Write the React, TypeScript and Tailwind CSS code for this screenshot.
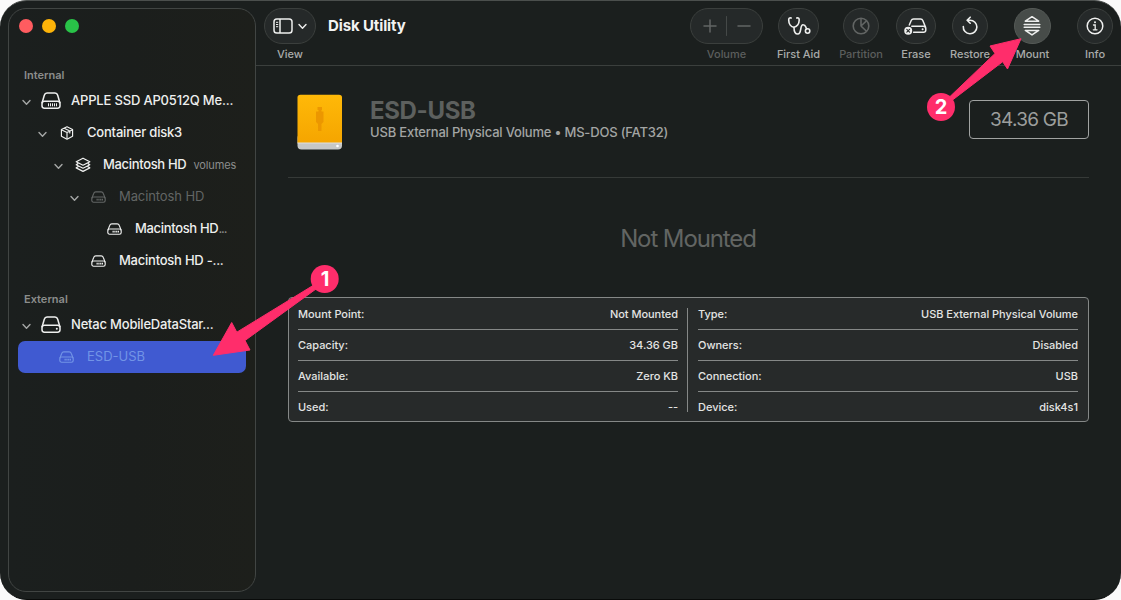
import type { ReactNode } from 'react';

function Chevron({ className = '' }: { className?: string }) {
  return (
    <svg className={`shrink-0 ${className}`} width="9" height="7" viewBox="0 0 9 7" fill="none" stroke="currentColor" strokeWidth="1.4" strokeLinecap="round" strokeLinejoin="round">
      <path d="M1 1.5 4.5 5.2 8 1.5" />
    </svg>
  );
}

function BigDrive({ vents = false }: { vents?: boolean }) {
  return (
    <svg className="-mt-px shrink-0" width="20" height="18" viewBox="0 0 20 18" fill="none" stroke="currentColor" strokeWidth="1.5" strokeLinejoin="round">
      <path d="M1 11.2 3.3 3.2Q3.9 1 6 1H14Q16.1 1 16.7 3.2L19 11.2" />
      <rect x="1" y="9.2" width="18" height="7" rx="2.4" />
      {vents ? (
        <path d="M7.5 11.3v3M9.5 11.3v3M11.5 11.3v3M13.5 11.3v3M15.5 11.3v3" strokeWidth="1" />
      ) : (
        <circle cx="15.8" cy="12.8" r="1" fill="currentColor" stroke="none" />
      )}
    </svg>
  );
}

function SmallDrive() {
  return (
    <svg className="-ml-px shrink-0" width="15" height="12" viewBox="0 0 15 12" fill="none" stroke="currentColor" strokeWidth="1.15" strokeLinejoin="round">
      <path d="M.8 7.4 2.8 2.2Q3.3.8 4.8.8H10.2Q11.7.8 12.2 2.2L14.2 7.4" />
      <rect x=".8" y="6" width="13.4" height="5.2" rx="1.7" />
      <path d="M5.5 8.6H12" strokeWidth="1.6" strokeDasharray="1.3 .5" />
    </svg>
  );
}

function Cube() {
  return (
    <svg className="shrink-0" width="14" height="14" viewBox="0 0 14 14" fill="none" stroke="currentColor" strokeWidth="1.15" strokeLinejoin="round">
      <path d="M7 .8 12.6 3.6V10.2L7 13.2 1.4 10.2V3.6Z" />
      <path d="M1.4 3.8 7 6.6 12.6 3.8M7 6.6V13M4.2 2.3 9.8 5.1V7.6" />
    </svg>
  );
}

function Stack() {
  return (
    <svg className="shrink-0" width="16" height="16" viewBox="0 0 16 16" fill="none" stroke="currentColor" strokeWidth="1.25" strokeLinejoin="round" strokeLinecap="round">
      <path d="M8 1.2 14.8 4.7 8 8.2 1.2 4.7Z" />
      <path d="M3 6.6 1.2 7.7 8 11.2 14.8 7.7 13 6.6M3 9.8 1.2 10.9 8 14.4 14.8 10.9 13 9.8" />
    </svg>
  );
}

function Row({ pad, open, icon, children, tone = 'text-[#eeefee]' }: { pad: string; open?: boolean; icon: ReactNode; children: ReactNode; tone?: string }) {
  return (
    <div className={`flex h-8 items-center whitespace-nowrap text-[13px] font-medium tracking-[-0.2px] ${pad} ${tone}`}>
      <span className="flex w-[9px] pt-0.5 text-[#a5a7a6]">{open && <Chevron />}</span>
      <span className="ml-1.5 flex w-[28px] justify-center">{icon}</span>
      <span className="ml-[6px]">{children}</span>
    </div>
  );
}

function Tool({ label, width, gap, disabled, active, children }: { label: string; width: string; gap: string; disabled?: boolean; active?: boolean; children: ReactNode }) {
  return (
    <div className={`flex shrink-0 flex-col items-center ${width} ${gap}`}>
      <div className={`flex h-9 w-full items-center justify-center rounded-full border ${active ? 'border-[#555a57] bg-[#474c49]' : 'border-[#3b3f3d] bg-[#252929]'} ${disabled ? 'text-[#626564]' : 'text-[#eeefee]'}`}>
        {children}
      </div>
      <span className={`mt-[3px] whitespace-nowrap text-[11px] leading-[14px] font-medium tracking-[-0.03px] ${disabled ? 'text-[#5b5e5d]' : 'text-[#a9abaa]'}`}>{label}</span>
    </div>
  );
}

function Details({ rows, className = '' }: { rows: [string, string][]; className?: string }) {
  return (
    <div className={className}>
      {rows.map(([name, value], i) => (
        <div key={name} className={`flex h-[31px] items-center justify-between text-[11px] font-medium text-[#e3e4e3] ${i < 3 ? 'border-b border-[#858887]' : ''}`}>
          <span className="tracking-[-0.03px]">{name}</span>
          <span className="tracking-[-0.03px]">{value}</span>
        </div>
      ))}
    </div>
  );
}

export default function App() {
  return (
    <div className="relative h-[600px] w-[1121px] overflow-hidden bg-[#fafafa] font-['Inter','Liberation_Sans',sans-serif]">
      <div className="flex h-[600px] overflow-hidden rounded-[27px] border-t border-b border-t-[#4b4f4d] border-b-[#090b0a] bg-[#1b1f1e]">
        <aside className="mt-[7px] ml-2 h-[584px] w-[248px] shrink-0 rounded-[18px] border border-[#414543] bg-linear-to-r from-[#1b1f1e] via-[#1b1e1c] to-[#1d1f1b]">
          <div className="flex h-[34px] items-center gap-[9px] pl-2.5">
            <i className="size-3.5 rounded-full bg-[#ff5c60]" />
            <i className="size-3.5 rounded-full bg-[#fdb409]" />
            <i className="size-3.5 rounded-full bg-[#29c348]" />
          </div>
          <h2 className="mt-[23px] mb-px flex h-[18px] items-center pl-[15px] text-[11px] font-semibold text-[#8b8d8c]">Internal</h2>
          <Row pad="pl-[13px]" open icon={<BigDrive vents />}><span className="tracking-[-0.18px]">APPLE SSD AP0512Q Me...</span></Row>
          <Row pad="pl-[29px]" open icon={<Cube />}>Container disk3</Row>
          <Row pad="pl-[45px]" open icon={<Stack />}><span className="tracking-[-0.33px]">Macintosh HD</span><span className="ml-[7px] text-[11px] font-normal tracking-[-0.1px] text-[#8b8d8c]">volumes</span></Row>
          <Row pad="pl-[61px]" open icon={<SmallDrive />} tone="text-[#626564]"><span className="font-normal tracking-[-0.1px]">Macintosh HD</span></Row>
          <Row pad="pl-[77px]" icon={<SmallDrive />}><span className="tracking-[-0.33px]">Macintosh HD</span><span className="font-normal tracking-[-1.1px] text-[#8b8d8c]">...</span></Row>
          <Row pad="pl-[61px]" icon={<SmallDrive />}><span className="tracking-[-0.24px]">Macintosh HD -...</span></Row>
          <h2 className="mt-[13px] mb-px flex h-[18px] items-center pl-[15px] text-[11px] font-semibold text-[#8b8d8c]">External</h2>
          <Row pad="pl-[13px]" open icon={<BigDrive />}>Netac MobileDataStar...</Row>
          <div className="mr-[9px] ml-[9px] rounded-[7px] bg-[#405ad1]">
            <Row pad="pl-[20px]" icon={<SmallDrive />} tone="text-[#7294e6]"><span className="font-normal tracking-normal">ESD-USB</span></Row>
          </div>
        </aside>

        <main className="min-w-0 flex-1">
          <header className="flex h-[65px] border-b border-[#3b3f3d] pt-[7px] pl-2">
            <Tool label="View" width="w-[52px]" gap="">
              <svg width="20" height="16" viewBox="0 0 20 16" fill="none" stroke="currentColor" strokeWidth="1.5">
                <rect x="1" y="1" width="18" height="14" rx="2.8" />
                <path d="M7 1V15" />
                <path d="M3 4.3H5.2M3 6.5H5.2M3 8.7H5.2" strokeWidth="1" />
              </svg>
              <Chevron className="ml-[5px]" />
            </Tool>
            <h1 className="mt-[7px] ml-3 text-[15px] leading-[22px] font-bold tracking-[-0.12px] whitespace-nowrap text-[#f2f3f2]">Disk Utility</h1>
            <div className="flex-1" />
            <div className="flex pr-2">
              <Tool label="Volume" width="w-[73px]" gap="" disabled>
                <svg width="50" height="22" viewBox="0 0 50 22" fill="none" stroke="currentColor" strokeWidth="1.5" strokeLinecap="round">
                  <path d="M2 11H14M8 5V17M36 11H48" />
                  <path d="M24.5 1.5V20.5" stroke="#454948" strokeWidth="1" />
                </svg>
              </Tool>
              <Tool label="First Aid" width="w-[41px]" gap="ml-[15px]">
                <svg width="24" height="20" viewBox="0 0 24 20" fill="none" stroke="currentColor" strokeWidth="1.6" strokeLinecap="round" strokeLinejoin="round">
                  <path d="M4.2 2Q1.7 1.4 1.7 4C1.7 8 4 11.2 6.9 11.2S12.2 8 12.2 4Q12.2 1.4 9.7 2" />
                  <path d="M7 11.4C7 15.5 8.2 18 10.8 18C15 18 12.6 8.8 16 8.8C19.2 8.8 18.3 11.3 19.7 12.9" />
                  <circle cx="20.6" cy="15" r="2.2" />
                </svg>
              </Tool>
              <Tool label="Partition" width="w-[36px]" gap="ml-[24px]" disabled>
                <svg width="18" height="18" viewBox="0 0 18 18" fill="none" stroke="currentColor" strokeWidth="1.6" strokeLinejoin="round">
                  <circle cx="9" cy="9" r="7.8" />
                  <path d="M9 1V9L14.7 3.7M9 9 14.7 14.5" />
                </svg>
              </Tool>
              <Tool label="Erase" width="w-[40px]" gap="ml-[17px]">
                <svg className="-ml-px" width="24" height="18" viewBox="0 0 24 18" fill="none" stroke="currentColor" strokeWidth="1.5" strokeLinejoin="round" strokeLinecap="round">
                  <path d="M5.3 8 7.2 3.5Q7.9 2 9.5 2H16.6Q18.2 2 18.8 3.5L21.6 10.2M7.8 9.2H19.4Q21.8 9.2 21.8 11.7V13Q21.8 15.3 19.4 15.3H9.6" />
                  <circle cx="18.6" cy="12.3" r="1" fill="currentColor" stroke="none" />
                  <circle cx="4.2" cy="13.8" r="4" fill="currentColor" stroke="none" />
                  <path d="M2.8 12.4 5.6 15.2M5.6 12.4 2.8 15.2" stroke="#252929" strokeWidth="1.1" />
                </svg>
              </Tool>
              <Tool label="Restore" width="w-[36px]" gap="ml-[16px]">
                <svg width="18" height="20" viewBox="0 0 18 20" fill="none" stroke="currentColor" strokeWidth="1.6" strokeLinecap="round" strokeLinejoin="round">
                  <path d="M2.3 10.5A6.8 6.8 0 1 0 9 4.2H6.8M9.2 1.2 6.1 4.2 9.2 7.2" />
                </svg>
              </Tool>
              <Tool label="Mount" width="w-[37px]" gap="ml-[26px]" active>
                <svg className="-ml-px" width="18" height="22" viewBox="0 0 18 22" fill="none" stroke="currentColor" strokeWidth="1.5" strokeLinecap="round" strokeLinejoin="round">
                  <path d="M2.3 6.2 9 1.7 15.7 6.2ZM2.3 15.4 9 19.9 15.7 15.4ZM1.2 9.4H16.8M1.2 12.3H16.8" />
                </svg>
              </Tool>
              <Tool label="Info" width="w-[36px]" gap="ml-[26px]">
                <svg width="18" height="18" viewBox="0 0 18 18" fill="none" stroke="currentColor" strokeWidth="1.5" strokeLinecap="round">
                  <circle cx="9" cy="9" r="7.8" />
                  <path d="M7.5 8H9.2V12.7M7.3 12.8H11" strokeWidth="1.3" />
                  <circle cx="9" cy="5.2" r="1" fill="currentColor" stroke="none" />
                </svg>
              </Tool>
            </div>
          </header>

          <section className="ml-8 flex h-[112px] w-[801px] border-b border-[#363a38]">
            <svg className="mt-[28px] ml-[9px] shrink-0" width="46" height="57" viewBox="0 0 46 57">
              <defs>
                <linearGradient id="case" x1="0" y1="0" x2="0" y2="1">
                  <stop offset="0" stopColor="#ffb908" />
                  <stop offset="1" stopColor="#f5a500" />
                </linearGradient>
              </defs>
              <rect x=".5" y="40" width="44.5" height="15.5" rx="4" fill="#c6c7c6" />
              <path d="M.5 3.5Q.5.8 3.5.8H42Q45 .8 45 3.5V49H.5Z" fill="url(#case)" />
              <path d="M.5 49H45" stroke="#dfe0df" />
              <path d="M20.5 13H25V16H24.5V17.5H26.5V28L24.5 30V37H21V30L19 28V17.5H21.5V16H20.5Z" fill="#ec9700" />
              <circle cx="40.5" cy="52" r="1.3" fill="#fff" />
            </svg>
            <div className="ml-[27px] flex-1 pt-[31px] whitespace-nowrap">
              <h2 className="text-[24px] leading-[28px] font-bold tracking-[-0.35px] text-[#5d605e]">ESD-USB</h2>
              <p className="-mt-px text-[13px] leading-[16px] font-medium tracking-[-0.19px] text-[#a3a5a4]">USB External Physical Volume • MS-DOS (FAT32)</p>
            </div>
            <div className="mt-[34px] flex h-[39px] w-[120px] items-center justify-center rounded border border-[#a1a3a2] pt-0.5 text-[19px] tracking-[-0.75px] text-[#9c9e9d]">34.36 GB</div>
          </section>

          <div className="ml-8 flex h-[119px] w-[801px] items-center justify-center pt-[3px] pr-px text-[24px] tracking-[-1.1px] text-[#626563]">Not Mounted</div>

          <section className="ml-8 flex h-[125px] w-[801px] rounded border border-[#858887] bg-[#272a2a] pr-[10px] pl-[9px]">
            <Details className="mt-px w-[380px]" rows={[['Mount Point:', 'Not Mounted'], ['Capacity:', '34.36 GB'], ['Available:', 'Zero KB'], ['Used:', '--']]} />
            <div className="mt-2.5 mr-[10px] ml-[9px] h-[104px] w-px bg-[#858887]" />
            <Details className="mt-px min-w-0 flex-1" rows={[['Type:', 'USB External Physical Volume'], ['Owners:', 'Disabled'], ['Connection:', 'USB'], ['Device:', 'disk4s1']]} />
          </section>
        </main>
      </div>

      <svg className="absolute inset-0" width="1121" height="600" viewBox="0 0 1121 600" fill="#ff2d6b">
        <path d="M213.3 355.3 231.7 322.5 236.8 332.2 313 285.5 316 289 245 340.5 250 350Z" stroke="#ff2d6b" strokeWidth="1" strokeLinejoin="round" />
        <path d="M1021 38.7 990 46 995 53.5 949.5 97 952.5 100 1002.7 61.7 1007.5 69Z" stroke="#ff2d6b" strokeWidth="1" strokeLinejoin="round" />
        <circle cx="324.7" cy="279" r="14" />
        <circle cx="941" cy="107" r="14" />
      </svg>
      <div className="absolute top-[265px] left-[311px] flex size-7 items-center justify-center text-[20px] leading-none font-bold text-white">1</div>
      <div className="absolute top-[93px] left-[927px] flex size-7 items-center justify-center text-[20px] leading-none font-bold text-white">2</div>
    </div>
  );
}
